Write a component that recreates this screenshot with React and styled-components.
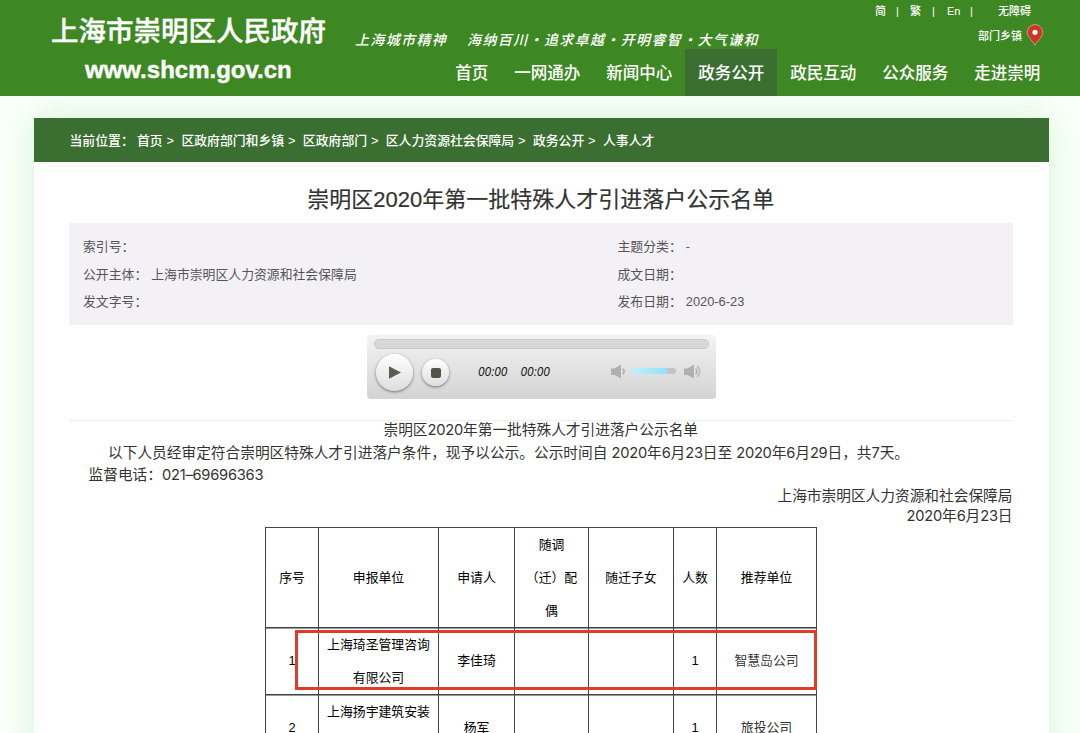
import React, { Fragment } from "react";
import styled, { createGlobalStyle } from "styled-components";

const GlobalStyle = createGlobalStyle`
     * {
          box-sizing: border-box;
     }

     body {
          margin: 0;
          height: 733px;
          overflow: hidden;
          background: #f9fffa;
          font-family: "Liberation Sans", "Noto Sans CJK SC", sans-serif;
          color: #333;
     }
`;

const navItems = ["首页", "一网通办", "新闻中心", "政务公开", "政民互动", "公众服务", "走进崇明"];

const crumbs = ["首页", "区政府部门和乡镇", "区政府部门", "区人力资源社会保障局", "政务公开", "人事人才"];

const meta = [
     { label: "索引号：", value: "" },
     { label: "主题分类：", value: "-" },
     { label: "公开主体：", value: "上海市崇明区人力资源和社会保障局" },
     { label: "成文日期：", value: "" },
     { label: "发文字号：", value: "" },
     { label: "发布日期：", value: "2020-6-23" },
];

const columns = [
     { width: 53, lines: ["序号"] },
     { width: 120, lines: ["申报单位"] },
     { width: 76, lines: ["申请人"] },
     { width: 74, lines: ["随调", "（迁）配", "偶"] },
     { width: 85, lines: ["随迁子女"] },
     { width: 43, lines: ["人数"] },
     { width: 100, lines: ["推荐单位"] },
];

const rows = [
     { no: 1, company: ["上海琦圣管理咨询", "有限公司"], name: "李佳琦", count: 1, unit: "智慧岛公司" },
     { no: 2, company: ["上海扬宇建筑安装", "有限公司"], name: "杨军", count: 1, unit: "旅投公司" },
];

const Header = () => (
     <Banner>
          <Brand>
               <SiteName>上海市崇明区人民政府</SiteName>
               <SiteUrl>www.shcm.gov.cn</SiteUrl>
          </Brand>
          <HeaderMain>
               <HeaderTop>
                    <Slogan>
                         <span>上海城市精神</span>
                         <span>
                              海纳百川<Dot>·</Dot>追求卓越<Dot>·</Dot>开明睿智<Dot>·</Dot>大气谦和
                         </span>
                    </Slogan>
                    <Tools>
                         <Languages>
                              <ToolLink $width={21}>简</ToolLink>
                              <ToolLink $width={14}>|</ToolLink>
                              <ToolLink $width={22}>繁</ToolLink>
                              <ToolLink $width={15}>|</ToolLink>
                              <ToolLink $width={23}>En</ToolLink>
                              <ToolLink $width={28}>|</ToolLink>
                              <ToolLink $width={34}>无障碍</ToolLink>
                         </Languages>
                         <Departments>
                              部门乡镇
                              <Pin />
                         </Departments>
                    </Tools>
               </HeaderTop>
               <Nav>
                    {navItems.map((item) => (
                         <NavItem key={item} $active={item === "政务公开"}>
                              {item}
                         </NavItem>
                    ))}
               </Nav>
          </HeaderMain>
     </Banner>
);

const Pin = () => (
     <svg width="18" height="22" viewBox="0 0 18 22">
          <path
               d="M9 21.2C7.6 18 1.2 12.9 1.2 8.4a7.8 7.8 0 0 1 15.6 0C16.8 12.9 10.4 18 9 21.2Z"
               fill="#cf3424"
               stroke="#b7a58a"
               strokeWidth="1"
          />
          <circle cx="9" cy="8.3" r="2.6" fill="#fff" />
     </svg>
);

const Speaker = ({ loud }) => (
     <svg width="20" height="16" viewBox="0 0 20 16">
          <path d="M1 4.5h3.500L11 .5v14l-6.500-3.500H1Z" fill="#b0b0b3" />
          <path d="M12.500 5q3.500 2.500 0 5" fill="none" stroke="#b4b4b7" strokeWidth="1.800" />
          {loud && <path d="M14 2q6 5.500 0 11" fill="none" stroke="#c0c0c3" strokeWidth="1.700" />}
     </svg>
);

const Player = () => (
     <PlayerBox>
          <Progress />
          <Controls>
               <RoundButton $size={37}>
                    <svg width="14" height="13" viewBox="0 0 14 13">
                         <path d="M1 .3 13 6.500 1 12.700Z" fill="#5d5b52" />
                    </svg>
               </RoundButton>
               <RoundButton $size={27}>
                    <StopMark />
               </RoundButton>
               <Times>
                    <span>00:00</span>
                    <span>00:00</span>
               </Times>
               <Speaker />
               <Volume />
               <Speaker loud />
          </Controls>
     </PlayerBox>
);

const NameTable = () => (
     <TableWrap>
          <Table>
               <colgroup>
                    {columns.map((col) => (
                         <Col key={col.lines[0]} $width={col.width} />
                    ))}
               </colgroup>
               <thead>
                    <tr>
                         {columns.map((col) => (
                              <HeadCell key={col.lines[0]}>
                                   {col.lines.map((line) => (
                                        <Line key={line}>{line}</Line>
                                   ))}
                              </HeadCell>
                         ))}
                    </tr>
               </thead>
               <tbody>
                    {rows.map((row) => (
                         <tr key={row.no}>
                              <Cell>{row.no}</Cell>
                              <Cell>
                                   {row.company.map((line) => (
                                        <Line key={line}>{line}</Line>
                                   ))}
                              </Cell>
                              <Cell>{row.name}</Cell>
                              <Cell />
                              <Cell />
                              <Cell>{row.count}</Cell>
                              <Cell $soft>{row.unit}</Cell>
                         </tr>
                    ))}
               </tbody>
          </Table>
          <Highlight />
     </TableWrap>
);

const App = () => (
     <>
          <GlobalStyle />
          <Header />
          <Page>
               <Breadcrumb>
                    <CrumbLabel>当前位置：</CrumbLabel>
                    {crumbs.map((crumb, i) => (
                         <Fragment key={crumb}>
                              <span>{crumb}</span>
                              {i < crumbs.length - 1 && <Arrow>&gt;</Arrow>}
                         </Fragment>
                    ))}
               </Breadcrumb>
               <Content>
                    <Title>崇明区2020年第一批特殊人才引进落户公示名单</Title>
                    <Meta>
                         {meta.map((item) => (
                              <MetaItem key={item.label}>
                                   <span>{item.label}</span>
                                   <span>{item.value}</span>
                              </MetaItem>
                         ))}
                    </Meta>
                    <Player />
                    <Article>
                         <Heading>
                              崇明区<Num>2020</Num>年第一批特殊人才引进落户公示名单
                         </Heading>
                         <Paragraph $indent={39}>
                              以下人员经审定符合崇明区特殊人才引进落户条件，现予以公示。公示时间自 <Num>2020</Num>年
                              <Num>6</Num>月<Num>23</Num>日至 <Num>2020</Num>年<Num>6</Num>月<Num>29</Num>日，共
                              <Num>7</Num>天。
                         </Paragraph>
                         <Paragraph $indent={19.5}>
                              监督电话：<Num>021–69696363</Num>
                         </Paragraph>
                         <Signature>
                              <div>上海市崇明区人力资源和社会保障局</div>
                              <div>
                                   <Num>2020</Num>年<Num>6</Num>月<Num>23</Num>日
                              </div>
                         </Signature>
                    </Article>
                    <NameTable />
               </Content>
          </Page>
     </>
);

const Banner = styled.header`
     position: relative;
     z-index: 1;
     display: flex;
     height: 96px;
     background: #3e8824;
     color: #fff;
     font-weight: 500;
`;

const Brand = styled.div`
     width: 355px;
     padding: 13px 0 0 51px;
     white-space: nowrap;
`;

const SiteName = styled.div`
     font-size: 27.5px;
     line-height: 38px;
     -webkit-text-stroke: 0.4px #fff;
`;

const SiteUrl = styled.div`
     padding-left: 34px;
     font-size: 24px;
     line-height: 38px;
     font-weight: 700;
     -webkit-text-stroke: 0.4px #fff;
`;

const HeaderMain = styled.div`
     flex: 1;
     display: flex;
     flex-direction: column;
     padding-right: 26px;
`;

const HeaderTop = styled.div`
     display: flex;
     justify-content: space-between;
     height: 49px;
`;

const Slogan = styled.div`
     display: flex;
     gap: 20px;
     padding-top: 29px;
     font-family: "Noto Sans CJK SC", sans-serif;
     font-size: 14px;
     line-height: 20px;
     letter-spacing: 1.35px;
     font-style: italic;
     white-space: nowrap;
`;

const Dot = styled.span`
     display: inline-block;
     width: 15.4px;
     text-align: center;
`;

const Tools = styled.div`
     width: 179px;
     font-size: 11px;
`;

const Languages = styled.div`
     display: flex;
     height: 22px;
     line-height: 23px;
     white-space: nowrap;
`;

const ToolLink = styled.span`
     width: ${(props) => props.$width}px;
`;

const Departments = styled.div`
     display: flex;
     align-items: center;
     justify-content: flex-end;
     gap: 4px;
     height: 26px;
     padding-right: 10px;
`;

const Nav = styled.nav`
     display: flex;
     justify-content: flex-end;
     height: 47px;
     padding-right: 0.7px;
`;

const NavItem = styled.a`
     padding: 1px 12.95px 0;
     font-size: 16.55px;
     line-height: 47px;
     background: ${(props) => (props.$active ? "#3a6f31" : "transparent")};
`;

const Page = styled.main`
     width: 1014.5px;
     height: 640px;
     margin: 22px 0 0 34px;
     background: #fff;
     box-shadow: 0 0 34px #d9f3d6;
`;

const Breadcrumb = styled.div`
     display: flex;
     height: 44px;
     padding-left: 35.5px;
     background: #3a6f31;
     color: #fff;
     font-size: 12.85px;
     font-weight: 500;
     line-height: 45px;
     white-space: nowrap;
`;

const CrumbLabel = styled.span`
     width: 67.5px;
`;

const Arrow = styled.span`
     width: 18.7px;
     padding-left: 3.8px;
`;

const Content = styled.div`
     padding: 0 36px 0 35px;
`;

const Title = styled.h1`
     margin: 0;
     padding-top: 15px;
     height: 61px;
     font-size: 22px;
     line-height: 46px;
     font-weight: 400;
     text-align: center;
     -webkit-text-stroke: 0.2px #333;
`;

const Meta = styled.div`
     display: grid;
     grid-template-columns: 534.5px 1fr;
     grid-auto-rows: 27.6px;
     height: 102px;
     padding: 10px 14px;
     background: #f3f1f5;
     color: #555;
     font-size: 12.85px;
     line-height: 27.6px;
`;

const MetaItem = styled.div`
     display: flex;
     gap: 4px;
`;

const PlayerBox = styled.div`
     width: 349px;
     height: 64px;
     margin: 10px auto 20.5px 298px;
     padding: 4px 7px;
     border-radius: 4px;
     background: linear-gradient(#f3f3f3, #d3d3d3);
`;

const Progress = styled.div`
     height: 10px;
     border-radius: 5px;
     background: #d8d8d8;
     border: 1px solid #c8c8c8;
`;

const Controls = styled.div`
     display: flex;
     align-items: center;
     height: 46px;
     padding-left: 2px;
`;

const RoundButton = styled.div`
     display: flex;
     align-items: center;
     justify-content: center;
     flex: none;
     width: ${(props) => props.$size}px;
     height: ${(props) => props.$size}px;
     margin: 1px 9px 0 0;
     border-radius: 50%;
     background: linear-gradient(#fff, #dedede);
     box-shadow: 0 1px 3px rgba(0, 0, 0, 0.5);
`;

const StopMark = styled.div`
     width: 10px;
     height: 10px;
     border-radius: 2px;
     background: #55544c;
`;

const Times = styled.div`
     display: flex;
     gap: 13px;
     width: 152px;
     padding: 0 0 2px 20px;
     color: #111;
     font-family: "Open Sans", sans-serif;
     font-size: 12px;
     font-style: italic;
`;

const Volume = styled.div`
     width: 45px;
     height: 6px;
     margin: 0 7px 2px 1px;
     border-radius: 3px;
     background: linear-gradient(90deg, #c3effb, #8ee2fa 80%, #c4c4c8 80%);
`;

const Article = styled.div`
     border-top: 1px solid #eee;
     font-size: 14.7px;
     line-height: 22px;
`;

const Heading = styled.div`
     height: 21px;
     line-height: 19px;
     text-align: center;
`;

const Paragraph = styled.div`
     padding-left: ${(props) => props.$indent}px;
     white-space: nowrap;
`;

const Signature = styled.div`
     line-height: 20.5px;
     text-align: right;
`;

const Num = styled.span`
     font-family: Inter, sans-serif;
     letter-spacing: -0.25px;
`;

const TableWrap = styled.div`
     position: relative;
     width: 552px;
     margin: 0 0 0 196px;
`;

const Table = styled.table`
     width: 552px;
     table-layout: fixed;
     border-collapse: collapse;
     color: #000;
     font-size: 12.85px;
     line-height: 33px;
     text-align: center;
`;

const Col = styled.col`
     width: ${(props) => props.$width}px;
`;

const Cell = styled.td`
     height: 67px;
     padding: 0;
     border: 1px solid #444;
     box-shadow: inset 0 1px 0 #999;
     color: ${(props) => (props.$soft ? "#333" : "#000")};
`;

const HeadCell = styled(Cell)`
     height: 100px;
     box-shadow: none;
     font-weight: 400;
`;

const Line = styled.div`
     white-space: nowrap;
`;

const Highlight = styled.div`
     position: absolute;
     top: 103px;
     left: 30px;
     width: 522px;
     height: 60px;
     border: 3px solid #dd3c2a;
`;

export default App;
